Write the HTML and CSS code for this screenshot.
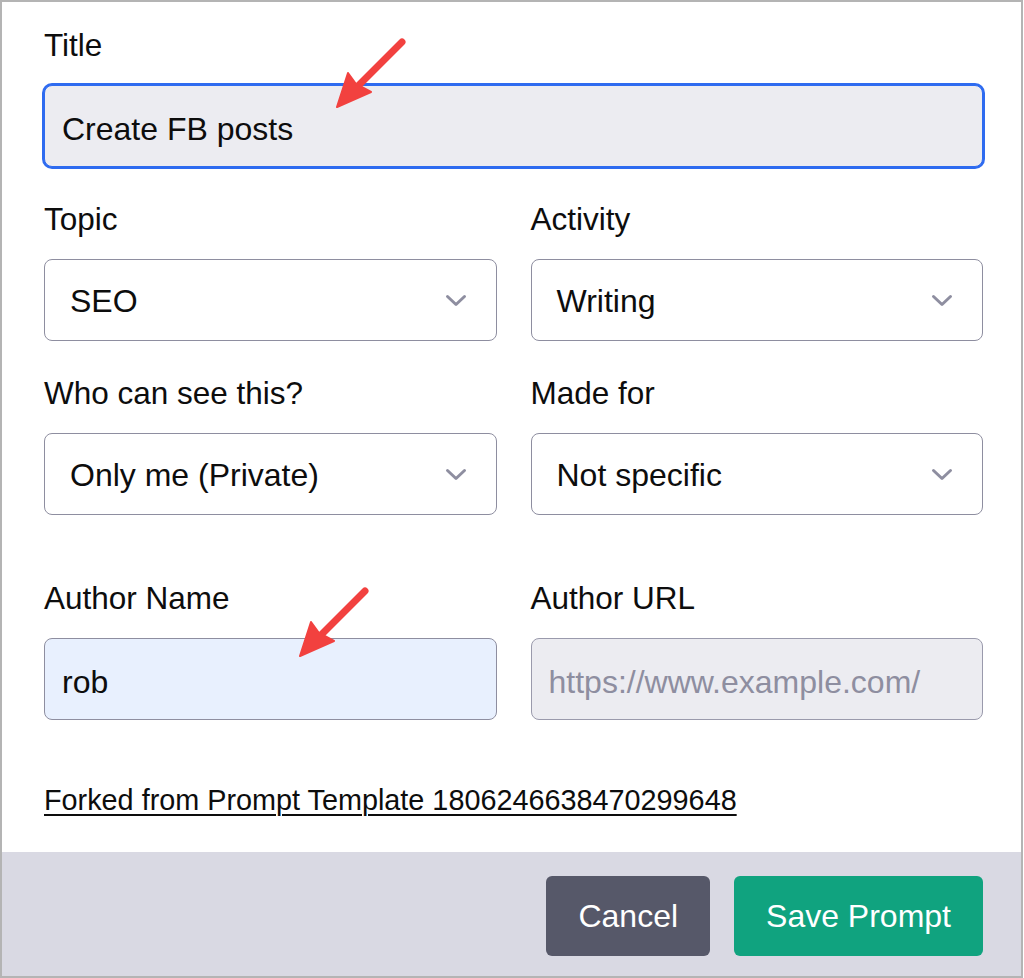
FILE: index.html
```html
<!DOCTYPE html>
<html lang="en">
  <head>
    <meta charset="UTF-8" />
    <meta name="viewport" content="width=device-width, initial-scale=1.0" />
    <title>Edit Prompt</title>
    <link rel="stylesheet" href="styles.css">
  </head>

  <body>
    <div class="dialog">
      <form class="content" id="prompt-form">
        <!-- Title -->
        <div class="field">
          <label for="title">Title</label>
          <input type="text" id="title" class="input input-focus" value="Create FB posts" />
        </div>

        <div class="row">
          <div class="field">
            <label>Topic</label>
            <div class="select">
              <span>SEO</span>
              <svg class="chevron" width="22" height="13" viewBox="0 0 22 13"><path d="M2.5 2.5 L11 10.5 L19.5 2.5" /></svg>
            </div>
          </div>
          <div class="field">
            <label>Activity</label>
            <div class="select">
              <span>Writing</span>
              <svg class="chevron" width="22" height="13" viewBox="0 0 22 13"><path d="M2.5 2.5 L11 10.5 L19.5 2.5" /></svg>
            </div>
          </div>
        </div>

        <div class="row">
          <div class="field">
            <label>Who can see this?</label>
            <div class="select">
              <span>Only me (Private)</span>
              <svg class="chevron" width="22" height="13" viewBox="0 0 22 13"><path d="M2.5 2.5 L11 10.5 L19.5 2.5" /></svg>
            </div>
          </div>
          <div class="field">
            <label>Made for</label>
            <div class="select">
              <span>Not specific</span>
              <svg class="chevron" width="22" height="13" viewBox="0 0 22 13"><path d="M2.5 2.5 L11 10.5 L19.5 2.5" /></svg>
            </div>
          </div>
        </div>

        <!-- Author -->
        <div class="row row-author">
          <div class="field">
            <label for="author-name">Author Name</label>
            <input type="text" id="author-name" class="input input-filled" value="rob" />
          </div>
          <div class="field">
            <label for="author-url">Author URL</label>
            <input type="text" id="author-url" class="input input-disabled" placeholder="https://www.example.com/" disabled />
          </div>
        </div>

        <a class="fork-link" href="#">Forked from Prompt Template 1806246638470299648</a>
      </form>

      <div class="footer">
        <button type="button" class="btn btn-cancel">Cancel</button>
        <button type="submit" form="prompt-form" class="btn btn-save">Save Prompt</button>
      </div>

      <!-- annotation arrows -->
      <svg class="arrow arrow-title" width="90" height="90" viewBox="0 0 90 90">
        <path class="arrow-line" d="M75 12 L30 57" />
        <polygon class="arrow-head" points="10,77 21,43 29,54 44,62" />
      </svg>
      <svg class="arrow arrow-author" width="90" height="90" viewBox="0 0 90 90">
        <path class="arrow-line" d="M75 12 L30 57" />
        <polygon class="arrow-head" points="10,77 21,43 29,54 44,62" />
      </svg>
    </div>
  </body>
</html>
```

FILE: styles.css
```css
body {
  margin: 0;
  padding: 0;
  background: #fff;
  font-family: "Liberation Sans", Arial, sans-serif;
  color: #0d0d0d;
}

.dialog {
  position: relative;
  width: 1023px;
  height: 978px;
  box-sizing: border-box;
  border: 2px solid #b4b4b4;
  display: flex;
  flex-direction: column;
  background: #fff;
}

.content {
  flex: 1;
  display: flex;
  flex-direction: column;
  align-items: flex-start;
  padding: 23px 38px 0 42px;
  margin: 0;
}

.field {
  display: flex;
  flex-direction: column;
  width: 100%;
}

label {
  display: block;
  font-size: 31.5px;
  line-height: 40px;
  margin-bottom: 20px;
}

.row {
  display: grid;
  grid-template-columns: 1fr 1fr;
  gap: 34px;
  width: 100%;
  margin-top: 32px;
}

.row-author {
  margin-top: 63px;
}

.input,
.select {
  width: 100%;
  height: 82px;
  box-sizing: border-box;
  border: 1px solid #8e8ea0;
  border-radius: 8px;
  font-family: inherit;
  font-size: 32px;
  color: #0d0d0d;
  margin: 0;
}

.input {
  padding: 7px 17px 0;
  outline: none;
}

.input-focus {
  background: #ececf1;
  border-color: #2e6bf0;
  box-shadow: 0 0 0 2px #2e6bf0;
}

.input-filled {
  background: #e8f0fe;
}

.input-disabled {
  background: #ececf1;
  border-color: #9a9aac;
}

.input-disabled::placeholder {
  color: #8e8ea0;
}

.select {
  display: flex;
  align-items: center;
  justify-content: space-between;
  padding: 3px 29px 0 25px;
  background: #fff;
}

.chevron {
  margin-top: -3px;
}

.chevron path {
  fill: none;
  stroke: #8e8ea0;
  stroke-width: 3;
  stroke-linecap: round;
  stroke-linejoin: round;
}

.fork-link {
  margin-top: 60px;
  font-size: 28.8px;
  line-height: 40px;
  color: #0d0d0d;
  text-decoration: underline;
  text-decoration-thickness: 2px;
  text-underline-offset: 4px;
}

.footer {
  height: 124px;
  box-sizing: border-box;
  background: #d9d9e3;
  display: flex;
  justify-content: flex-end;
  align-items: flex-start;
  gap: 24px;
  padding: 24px 38px 20px;
}

.btn {
  height: 80px;
  padding: 0 32px;
  border: none;
  border-radius: 6px;
  font-family: inherit;
  font-size: 32px;
  color: #fff;
  cursor: pointer;
}

.btn-cancel {
  background: #565869;
}

.btn-save {
  background: #10a37f;
}

/* red annotation arrows drawn over the form */
.arrow {
  position: absolute;
  pointer-events: none;
}

.arrow-title {
  left: 325px;
  top: 28px;
}

.arrow-author {
  left: 288px;
  top: 577px;
}

.arrow-line {
  stroke: #f2413f;
  stroke-width: 7;
  stroke-linecap: round;
  fill: none;
}

.arrow-head {
  fill: #f2413f;
  stroke: #f2413f;
  stroke-width: 2;
  stroke-linejoin: round;
}
```
